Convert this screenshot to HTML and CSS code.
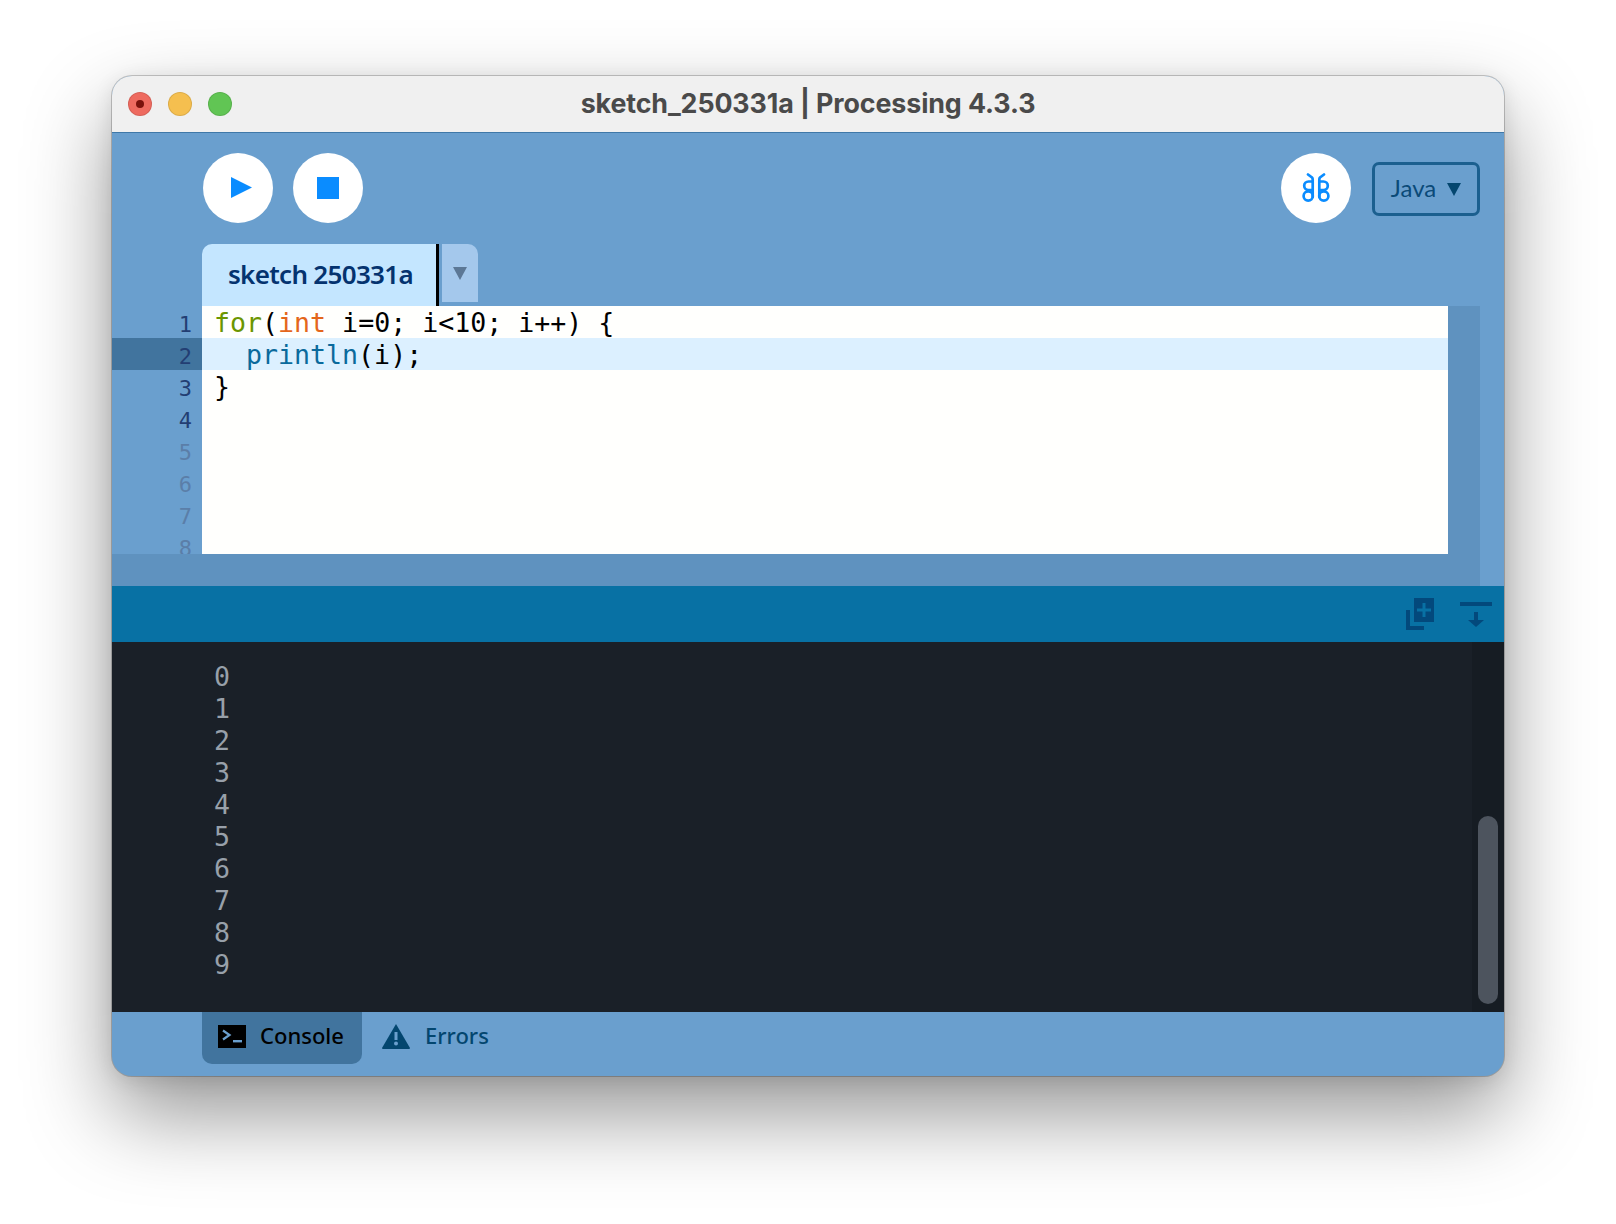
FILE: index.html
```html
<!DOCTYPE html>
<html lang="en">
<head>
<meta charset="utf-8">
<title>sketch_250331a | Processing 4.3.3</title>
<link rel="stylesheet" href="styles.css">
</head>
<body>
<div class="window">
  <header class="titlebar">
    <div class="lights">
      <span class="light red"><span class="red-dot"></span></span>
      <span class="light yellow"></span>
      <span class="light green"></span>
    </div>
    <div class="title">sketch_250331a | Processing 4.3.3</div>
    <div></div>
  </header>
  <section class="toolbar">
    <button class="round play">
      <svg width="22" height="22" viewBox="0 0 22 22"><path d="M0 0 L21 10.5 L0 21 Z" fill="#0a8cff"/></svg>
    </button>
    <button class="round">
      <svg width="22" height="22" viewBox="0 0 22 22"><rect width="22" height="22" fill="#0a8cff"/></svg>
    </button>
    <div class="spacer"></div>
    <button class="round">
      <svg width="30" height="30" viewBox="0 0 30 30" fill="none" stroke="#0a8cff" stroke-width="2.7" stroke-linecap="round">
        <path d="M7 1.5 L11 4.5 Q11.7 5.2 11.7 6.5 V24 M11.7 8.5 H7.5 A4.3 4.3 0 0 0 7.5 17.1 H11.7"/>
        <circle cx="7.2" cy="23" r="4.6"/>
        <path d="M23 1.5 L19 4.5 Q18.3 5.2 18.3 6.5 V24 M18.3 8.5 H22.5 A4.3 4.3 0 0 1 22.5 17.1 H18.3"/>
        <circle cx="22.8" cy="23" r="4.6"/>
      </svg>
    </button>
    <button class="mode"><span class="mode-label">Java</span><span class="mode-arrow"></span></button>
  </section>
  <nav class="tabs">
    <div class="tab">sketch 250331a</div>
    <div class="tab-sep"></div>
    <div class="tab-menu"><span class="tab-arrow"></span></div>
  </nav>
  <section class="editor-wrap">
    <div class="editor-main">
      <div class="editor-row">
        <div class="editor">
          <div class="line">
            <span class="num">1</span><code class="code"><span class="kw-green">for</span>(<span class="kw-orange">int</span> i=0; i&lt;10; i++) {</code>
          </div>
          <div class="line current">
            <span class="num">2</span><code class="code">  <span class="kw-blue">println</span>(i);</code>
          </div>
          <div class="line">
            <span class="num">3</span><code class="code">}</code>
          </div>
          <div class="line"><span class="num">4</span><code class="code"></code></div>
          <div class="line"><span class="num faded">5</span><code class="code"></code></div>
          <div class="line"><span class="num faded">6</span><code class="code"></code></div>
          <div class="line"><span class="num faded">7</span><code class="code"></code></div>
          <div class="line"><span class="num faded">8</span><code class="code"></code></div>
        </div>
        <div class="vscroll"></div>
      </div>
      <div class="hscroll"></div>
    </div>
  </section>
  <section class="console-head">
    <svg class="head-icon" width="30" height="34" viewBox="0 0 30 34">
      <path d="M0 12 H4 V28 H18 V32 H0 Z" fill="#03497c"/>
      <rect x="8" y="0" width="20" height="24" fill="#03497c"/>
      <path d="M16.5 5 H19.5 V10.5 H25 V13.5 H19.5 V19 H16.5 V13.5 H11 V10.5 H16.5 Z" fill="#0871a4"/>
    </svg>
    <svg class="head-icon" width="32" height="28" viewBox="0 0 32 28">
      <rect x="0" y="0" width="32" height="4" fill="#03497c"/>
      <rect x="14" y="10" width="4" height="10" fill="#03497c"/>
      <path d="M8 18 H24 L16 25 Z" fill="#03497c"/>
    </svg>
  </section>
  <section class="console">
    <div class="output">
      <div>0</div><div>1</div><div>2</div><div>3</div><div>4</div><div>5</div><div>6</div><div>7</div><div>8</div><div>9</div>
    </div>
    <div class="console-track"><div class="console-thumb"></div></div>
  </section>
  <footer class="footer">
    <div class="foot-tab active">
      <svg class="foot-icon" width="28" height="23" viewBox="0 0 28 23"><rect width="28" height="23" fill="#000"/><path d="M5 5.5 L11.5 10 L5 14.5" fill="none" stroke="#6a9fce" stroke-width="2.2"/><rect x="15" y="15" width="9" height="2.4" fill="#6a9fce"/></svg>
      <span class="foot-label">Console</span>
    </div>
    <div class="foot-tab">
      <svg class="foot-icon" width="28" height="25" viewBox="0 0 28 25"><path d="M14 0 L28 24 Q28 25 27 25 H1 Q0 25 0 24 Z" fill="#03466f"/><rect x="12.5" y="8" width="3" height="8" fill="#6a9fce"/><circle cx="14" cy="19.5" r="2" fill="#6a9fce"/></svg>
      <span class="foot-label">Errors</span>
    </div>
  </footer>
</div>
</body>
</html>
```
FILE: styles.css
```css
* { box-sizing: border-box; }
html, body { margin: 0; padding: 0; }
body { width: 1616px; height: 1224px; background: #fff; overflow: hidden; padding: 76px 0 0 112px; }

.window {
  width: 1392px;
  height: 1000px;
  border-radius: 20px;
  overflow: hidden;
  display: flex;
  flex-direction: column;
  background: #6a9fce;
  box-shadow: 0 0 0 1px rgba(0,0,0,.2), 0 38px 85px rgba(0,0,0,.42), 0 4px 20px rgba(0,0,0,.1);
}

.titlebar {
  height: 57px;
  flex: none;
  display: grid;
  grid-template-columns: 1fr auto 1fr;
  align-items: center;
  background: #f0f0f0;
  border-bottom: 1px solid #3f78a8;
}
.lights { display: flex; gap: 16px; padding-left: 16px; }
.light { width: 24px; height: 24px; border-radius: 50%; display: flex; align-items: center; justify-content: center; border: 1px solid rgba(0,0,0,.1); }
.red { background: #ee6a5f; }
.yellow { background: #f5bf4f; }
.green { background: #61c554; }
.red-dot { width: 8px; height: 8px; border-radius: 50%; background: #7a110b; }
.title { font: 700 26.8px/1 Inter, "Liberation Sans", sans-serif; color: #4a4a4a; letter-spacing: -.1px; padding-bottom: 2px; }

.toolbar {
  height: 111px;
  flex: none;
  display: flex;
  align-items: flex-start;
  padding: 20px 24px 0 91px;
  gap: 20px;
}
.spacer { flex: 1; }
.round { width: 70px; height: 70px; border-radius: 50%; border: 0; padding: 0; background: #fff; display: flex; align-items: center; justify-content: center; }
.play { padding-left: 7px; }
.mode {
  width: 108px; height: 54px; margin-top: 9px; margin-left: 1px;
  background: transparent; border: 3px solid #1b5f8f; border-radius: 7px;
  color: #0b4a78;
  display: flex; align-items: center; justify-content: center; gap: 11px; padding: 0;
}
.mode-label { font: 400 24px/1 Lato, "Noto Sans", sans-serif; padding-bottom: 3px; }
.mode-arrow { width: 0; height: 0; border-left: 7px solid transparent; border-right: 7px solid transparent; border-top: 13px solid #04466f; }

.tabs { height: 62px; flex: none; display: flex; align-items: flex-start; padding-left: 90px; }
.tab {
  width: 234px; height: 62px; background: #c4e6ff; border-radius: 10px 0 0 0;
  font: 600 26px/60px "Noto Sans", sans-serif; color: #04336f; padding-left: 26px; letter-spacing: -.7px;
}
.tab-sep { width: 3px; height: 62px; background: #000; }
.tab-menu { width: 36px; height: 58px; margin-left: 3px; background: #a4c8ec; border-radius: 0 10px 0 0; display: flex; align-items: center; justify-content: center; }
.tab-arrow { width: 0; height: 0; border-left: 7px solid transparent; border-right: 7px solid transparent; border-top: 13px solid #5c7896; }

.editor-wrap { height: 280px; flex: none; display: flex; padding-right: 24px; }
.editor-main { flex: 1; display: flex; flex-direction: column; }
.editor-row { height: 248px; display: flex; }
.editor { flex: 1; overflow: hidden; }
.vscroll { width: 32px; background: #5f92bf; }
.hscroll { height: 32px; background: #5f92bf; }

.line { height: 32px; display: flex; background: transparent; }
.num {
  width: 90px; flex: none; text-align: right; padding-right: 10px;
  font: 400 22px/38px "DejaVu Sans Mono", monospace; color: #233e73;
}
.num.faded { color: #5b7ea8; }
.code {
  flex: 1; background: #fffffd; padding-left: 12px; white-space: pre;
  font: 400 26.6px/34px "DejaVu Sans Mono", monospace; color: #000;
}
.current .num { background: #41749e; }
.current .code { background: #dcf0ff; }
.kw-green { color: #6b9600; }
.kw-orange { color: #e4661c; }
.kw-blue { color: #0a6a9c; }

.console-head { height: 56px; flex: none; background: #0871a4; display: flex; justify-content: flex-end; align-items: flex-start; padding: 12px 12px 0 0; gap: 24px; }
.head-icon { display: block; }
.head-icon + .head-icon { margin-top: 4px; }

.console { height: 370px; flex: none; background: #1a2028; display: flex; justify-content: space-between; }
.output { padding: 19px 0 0 102px; font: 400 26.6px/32px "DejaVu Sans Mono", monospace; color: #98a0aa; }
.console-track { width: 32px; background: #161c23; padding: 174px 6px 0 6px; }
.console-thumb { width: 20px; height: 188px; border-radius: 10px; background: #4d545e; }

.footer { flex: 1; display: flex; padding-left: 90px; gap: 0; }
.foot-tab { height: 52px; padding: 0 16px 4px; display: flex; align-items: center; gap: 14px; font: 500 22px/1 "Noto Sans", sans-serif; color: #03466f; }
.foot-icon { flex: none; }
.foot-label { padding-bottom: 2px; }
.foot-tab.active { width: 160px; background: #41749e; border-radius: 0 0 10px 10px; color: #000; }
.foot-tab + .foot-tab { padding-left: 20px; gap: 15px; }
```
